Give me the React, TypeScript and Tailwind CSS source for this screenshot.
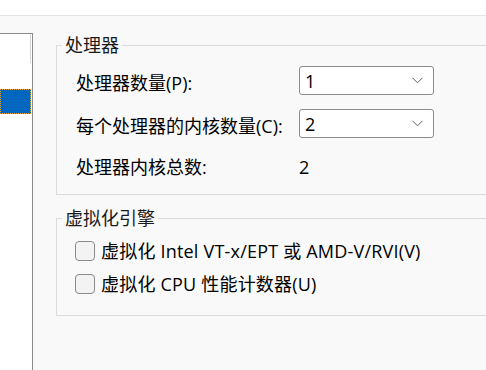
import React from 'react';

const font = { fontFamily: '"Open Sans", "Noto Sans CJK SC", sans-serif' };

const Chevron: React.FC = () => (
  <svg width="11" height="7" viewBox="0 0 11 7" fill="none">
    <path d="M0.5 0.8 L5.5 5.8 L10.5 0.8" stroke="#5f5f5f" strokeWidth="1" />
  </svg>
);

const Select: React.FC<{ value: string }> = ({ value }) => (
  <div className="flex h-[29px] w-[135px] items-center justify-between rounded-[3px] border border-[#8b8b8b] bg-white pl-[5px] pr-[10px]">
    <span className="text-[18px] leading-none text-black">{value}</span>
    <Chevron />
  </div>
);

const Checkbox: React.FC<{ label: React.ReactNode }> = ({ label }) => (
  <label className="flex h-[20px] items-center gap-[6px]">
    <span className="h-[20px] w-[20px] shrink-0 rounded-[4px] border border-[#8a8a8a] bg-[#f3f3f3]" />
    <span className="whitespace-nowrap text-[18px] leading-none tracking-[0.2px] text-black">{label}</span>
  </label>
);

const App: React.FC = () => {
  const rows = [
    { label: '处理器数量(P):', value: '1' },
    { label: '每个处理器的内核数量(C):', value: '2' },
  ];

  return (
    <div className="flex h-[370px] w-[486px] flex-col overflow-hidden bg-[#f9f9f9]" style={font}>
      <div className="h-[16px] shrink-0 border-b border-[#e5e5e5] bg-white" />

      <div className="flex flex-1">
        {/* device list, cut off at the left edge */}
        <div className="mt-[17px] w-[33px] shrink-0 border-t border-r border-[#8a8a8a] bg-white">
          <div className="ml-auto mr-[1px] h-[29px] w-[1px] bg-[#d6d6d6]" />
          <div className="mt-[26px] h-[25px] w-[31px] border border-dotted border-[#f5a623] bg-[#0067c0]" />
        </div>

        <div className="flex-1 pl-[23px]">
          <fieldset className="mt-[18px] w-[470px] border border-[#dcdcdc]">
            <legend className="ml-[5px] px-[3px] text-[18px] leading-[22px] text-[#1a1a1a]">处理器</legend>
            <div className="flex flex-col gap-[14px] pt-[10px] pb-[13px] pl-[19px]">
              {rows.map((r) => (
                <div key={r.label} className="flex h-[29px] items-center">
                  <span className="w-[223px] pt-[5px] text-[18px] leading-none text-black">{r.label}</span>
                  <Select value={r.value} />
                </div>
              ))}
              <div className="flex h-[29px] items-center">
                <span className="w-[223px] pt-[1px] text-[18px] leading-none text-black">处理器内核总数:</span>
                <span className="pt-[1px] text-[18px] leading-none text-black">2</span>
              </div>
            </div>
          </fieldset>

          <fieldset className="mt-[12px] w-[470px] border border-[#dcdcdc]">
            <legend className="ml-[5px] px-[3px] text-[18px] leading-[22px] text-[#1a1a1a]">虚拟化引擎</legend>
            <div className="flex flex-col gap-[13px] pt-[12px] pb-[21px] pl-[18px]">
              <Checkbox label="虚拟化 Intel VT-x/EPT 或 AMD-V/RVI(V)" />
              <Checkbox label="虚拟化 CPU 性能计数器(U)" />
            </div>
          </fieldset>
        </div>
      </div>
    </div>
  );
};

export default App;
